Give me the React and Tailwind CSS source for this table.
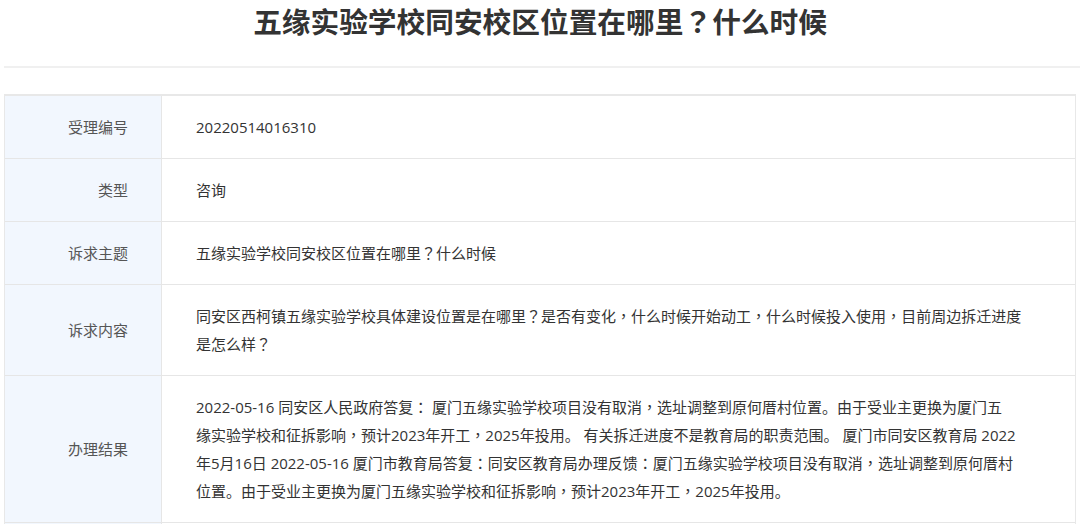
const rows = [
  { label: '受理编号', value: ['20220514016310'] },
  { label: '类型', value: ['咨询'] },
  { label: '诉求主题', value: ['五缘实验学校同安校区位置在哪里？什么时候'] },
  {
    label: '诉求内容',
    value: ['同安区西柯镇五缘实验学校具体建设位置是在哪里？是否有变化，什么时候开始动工，什么时候投入使用，目前周边拆迁进度是怎么样？'],
  },
  {
    // line breaks follow the original page
    label: '办理结果',
    value: [
      '2022-05-16 同安区人民政府答复： 厦门五缘实验学校项目没有取消，选址调整到原何厝村位置。由于受业主更换为厦门五',
      '缘实验学校和征拆影响，预计2023年开工，2025年投用。 有关拆迁进度不是教育局的职责范围。 厦门市同安区教育局 2022',
      '年5月16日 2022-05-16 厦门市教育局答复：同安区教育局办理反馈：厦门五缘实验学校项目没有取消，选址调整到原何厝村',
      '位置。由于受业主更换为厦门五缘实验学校和征拆影响，预计2023年开工，2025年投用。',
    ],
  },
  { label: '', value: [] },
];

// full-width ？ ： ， sit centred in the reference, like the TC forms
function Cjk({ text }) {
  return text.split(/([？：，])/).map((part, i) =>
    part === '？' || part === '：' || part === '，' ? (
      <span key={i} style={{ fontFamily: '"Noto Sans CJK TC", sans-serif' }}>{part}</span>
    ) : (
      part
    )
  );
}

export default function App() {
  return (
    <div className="w-full min-h-screen bg-white text-[#333]" style={{ fontFamily: '"Open Sans", "Noto Sans CJK SC", sans-serif' }}>
      {/* Title */}
      <h1 className="h-[42px] leading-[42px] text-center text-[28.7px] font-bold text-[#333]" style={{ fontFamily: '"Noto Sans CJK SC", sans-serif' }}>
        <Cjk text="五缘实验学校同安校区位置在哪里？什么时候" />
      </h1>
      <div className="mt-[24px] ml-[4px] h-[2px] bg-[#f0f0f0]" />

      {/* Detail table */}
      <div className="mt-[26px] ml-[4px] w-[1072px] border-t-2 border-l border-r border-[#e8e8e8]">
        {rows.map((row, i) => (
          <div key={i} className="grid grid-cols-[157px_1fr] border-b border-[#e6e6e6]">
            <div className="flex items-center justify-end bg-[#f2f7fe] border-r border-[#e6e6e6] pr-[33px] text-[15px] text-[#555]">
              {row.label}
            </div>
            <div className="pl-[34px] pr-[30px] py-[17px] text-[15px] leading-[28px] text-[#333] min-h-[62px]">
              {row.value.map((line, j) => (
                <div key={j} className={row.value.length > 1 ? 'whitespace-nowrap' : 'max-w-[827px]'}>
                  <Cjk text={line} />
                </div>
              ))}
            </div>
          </div>
        ))}
      </div>
    </div>
  );
}
